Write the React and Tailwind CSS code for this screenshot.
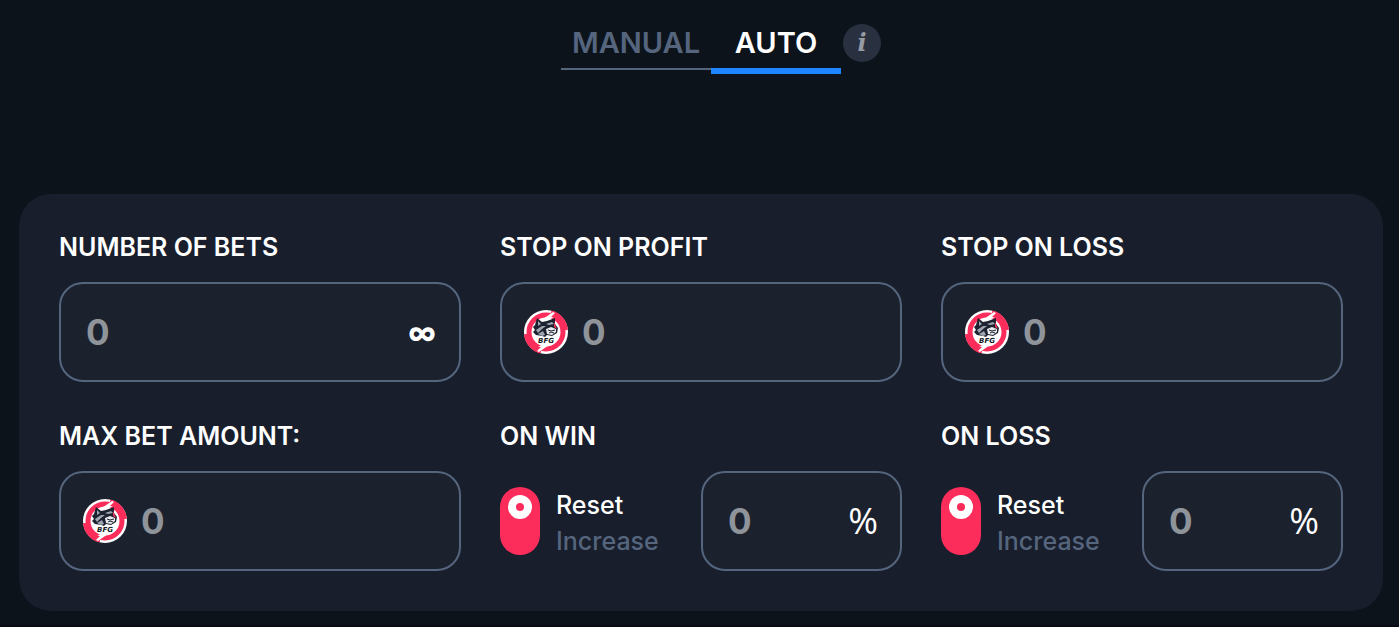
import { useState } from 'react';

function Coin() {
    return (
        <svg viewBox="0 0 44 44" className="h-11 w-11 shrink-0" aria-hidden="true">
            <circle cx="22" cy="22" r="22" fill="#fff" />
            {/* Ring */}
            <circle cx="22" cy="22" r="17" fill="none" stroke="#fc2d5b" strokeWidth="5" />
            <path d="M27 2.5A20 20 0 0 1 42 20" fill="none" stroke="#fc2d5b" strokeWidth="4" />
            <path d="M17 41.5A20 20 0 0 1 2 24" fill="none" stroke="#fc2d5b" strokeWidth="4" />
            <path d="M29 2l-10 7h3l-5 4 13-6h-3l4-4zM15 42l10-7h-3l5-4-13 6h3l-4 4z" fill="#fff" />
            {/* Raccoon */}
            <path d="M13 8l5 4 5-1 8-3 0 6 3 4-1 5-5 3-5-1-2 2-3-1-6-1-3-3 2-2-2-3 2-2z" fill="#1d2230" />
            <path d="M14 11l3 3-3 2zM12 20l6-4 4 0-4 3-4 4zM22 14l6-2 2 2-5 1zM14 24l5-3 2 4-3 1z" fill="#a0a6b0" />
            <path d="M22 19l5-2 5 2 0 3-4 3-5-1z" fill="#e8eaee" />
            <path d="M24 20l3 1 4-1M25 23l2-1 3 1" fill="none" stroke="#1d2230" strokeWidth="1" />
            <path d="M30 12l3 7-3-2z" fill="#fc2d5b" />
            <text x="22" y="33" textAnchor="middle" fill="#141823" className="font-['DejaVu_Sans',sans-serif] text-[7px] font-bold italic">BFG</text>
        </svg>
    );
}

function Field({ id, label, coin = false, suffix, className = 'w-full' }) {
    return (
        <div className={`flex h-[100px] items-center rounded-3xl border-2 border-[#55657e] bg-[#1b212d] px-[22px] ${className}`}>
            {coin && <Coin />}
            <input
                id={id}
                aria-label={label}
                placeholder="0"
                inputMode="decimal"
                className={`w-full min-w-0 flex-1 bg-transparent text-[35px] font-bold text-white outline-none placeholder:text-[#8f949b] ${coin ? 'pl-[14px]' : 'pl-[3px]'}`}
            />
            {suffix}
        </div>
    );
}

function AmountField({ id, title, coin, suffix }) {
    return (
        <div>
            <label htmlFor={id} className="mb-[22px] block text-[25px] leading-[26px] font-semibold">{title}</label>
            <Field id={id} coin={coin} suffix={suffix} />
        </div>
    );
}

function StrategyField({ id, title }) {
    const [increase, setIncrease] = useState(false);

    return (
        <div>
            <h2 className="mb-[22px] text-[25px] leading-[26px] font-semibold">{title}</h2>
            <div className="flex items-center">
                <label className="flex flex-1 cursor-pointer items-center gap-4">
                    <input
                        type="checkbox"
                        role="switch"
                        checked={increase}
                        onChange={(e) => setIncrease(e.target.checked)}
                        className="sr-only"
                    />
                    <span className={`flex h-[68px] w-10 flex-col items-center rounded-full bg-[#fc2d5b] py-2 ${increase ? 'justify-end' : 'justify-start'}`}>
                        <span className="h-6 w-6 rounded-full border-8 border-white" />
                    </span>
                    <span className="flex flex-col pt-1 text-[25px] leading-9 font-medium">
                        <span className={increase ? 'text-[#55657e]' : 'text-white'}>Reset</span>
                        <span className={increase ? 'text-white' : 'text-[#55657e]'}>Increase</span>
                    </span>
                </label>
                <Field
                    id={id}
                    label={`${title} percent`}
                    className="w-1/2"
                    suffix={<span className="font-['Open_Sans',sans-serif] text-4xl">%</span>}
                />
            </div>
        </div>
    );
}

function App() {
    const [mode, setMode] = useState('auto');

    const tabClass = (name) => (mode === name
        ? 'border-t-[6px] border-[#1e87ff]'
        : 'border-t-2 border-[#55657e]');

    return (
        <div className="min-h-screen border-b-2 border-[#080a14] bg-[#0c131b] pt-[18px] pr-4 pb-[14px] pl-[19px] font-['Inter',sans-serif] text-white">
            {/* Mode */}
            <div className="grid grid-cols-[1fr_auto_1fr]">
                <div className="col-start-2 flex">
                    <button
                        className={`w-[150px] text-[29px] font-semibold ${mode === 'manual' ? 'text-white' : 'text-[#55657e]'}`}
                        onClick={() => setMode('manual')}
                    >
                        <span className="block h-[50px] leading-[50px]">MANUAL</span>
                        <span className={`block h-[6px] ${tabClass('manual')}`} />
                    </button>
                    <button
                        className={`w-[130px] text-[29px] font-semibold ${mode === 'auto' ? 'text-white' : 'text-[#55657e]'}`}
                        onClick={() => setMode('auto')}
                    >
                        <span className="block h-[50px] leading-[50px]">AUTO</span>
                        <span className={`block h-[6px] ${tabClass('auto')}`} />
                    </button>
                </div>
                <button className="mt-[6px] ml-[2px] h-[38px] w-[38px] rounded-full bg-[#29303f] font-['DejaVu_Serif',serif] text-2xl leading-[38px] font-bold text-[#969ba3] italic">
                    i
                </button>
            </div>
            {/* Auto bet settings */}
            <div className="mt-[120px] grid grid-cols-3 gap-x-[39px] gap-y-[41px] rounded-[32px] bg-[#181e2b] p-10">
                <AmountField
                    id="bets"
                    title="NUMBER OF BETS"
                    suffix={<span className="font-['Open_Sans',sans-serif] text-[42px] font-bold">∞</span>}
                />
                <AmountField id="profit" title="STOP ON PROFIT" coin />
                <AmountField id="loss" title="STOP ON LOSS" coin />
                <AmountField id="max" title="MAX BET AMOUNT:" coin />
                <StrategyField id="on-win" title="ON WIN" />
                <StrategyField id="on-loss" title="ON LOSS" />
            </div>
        </div>
    );
}

export default App;
